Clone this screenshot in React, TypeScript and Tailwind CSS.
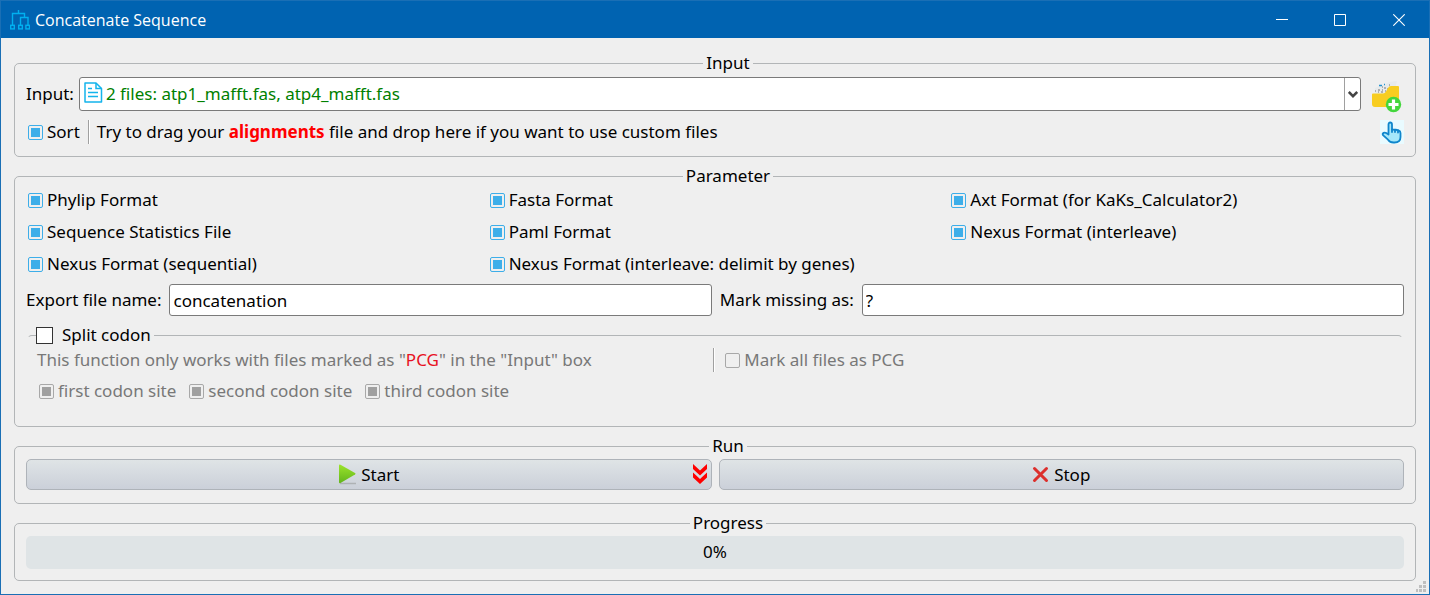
import React, { useState } from 'react';

const FORMATS = [
  'Phylip Format',
  'Fasta Format',
  'Axt Format (for KaKs_Calculator2)',
  'Sequence Statistics File',
  'Paml Format',
  'Nexus Format (interleave)',
  'Nexus Format (sequential)',
  'Nexus Format (interleave: delimit by genes)',
];

const CODON_SITES = ['first codon site', 'second codon site', 'third codon site'];

function CheckBox({ label, checked = false, disabled = false }: { label: string; checked?: boolean; disabled?: boolean }) {
  const [on, setOn] = useState(checked);
  return (
    <label className={`flex items-center gap-1 whitespace-nowrap ${disabled ? 'text-[#787878]' : ''}`}>
      <span className="relative flex size-[15px] shrink-0 items-center justify-center">
        <input
          type="checkbox"
          checked={on}
          disabled={disabled}
          onChange={(e) => setOn(e.target.checked)}
          className="peer size-[15px] appearance-none rounded-[2px] border border-[#3daee9] disabled:border-[#a8a8a8]"
        />
        <span className="pointer-events-none absolute hidden size-[9px] bg-[#3daee9] peer-checked:block peer-disabled:bg-[#a0a0a0]" />
      </span>
      {label}
    </label>
  );
}

function Group({ title, className, children }: { title: string; className: string; children: React.ReactNode }) {
  return (
    <fieldset className={`min-w-0 rounded-[5px] border border-[#b2b5b7] px-[11px] ${className}`}>
      <legend className="mx-auto flex h-[25px] items-center pr-[3px]">
        <span className="mr-[3px] h-px w-[26px] bg-[#b2b5b7]" />
        <span className="pb-[2px]">{title}</span>
      </legend>
      {children}
    </fieldset>
  );
}

function Divider() {
  return <span className="h-6 w-[2px] border-l border-[#a0a0a0] bg-white" />;
}

function TreeIcon() {
  return (
    <svg width="20" height="20" viewBox="0 0 20 20" fill="none" stroke="#00b0f0" strokeWidth="1.4">
      <path d="M8.500 0v3.500M2.500 15V3.500h12V7.500M10.500 15V7.500h7.500V15" />
      <rect x=".7" y="15.300" width="3.600" height="3.600" />
      <rect x="8.700" y="15.300" width="3.600" height="3.600" />
      <rect x="15.900" y="15.300" width="3.600" height="3.600" />
    </svg>
  );
}

function FileIcon() {
  return (
    <svg className="pointer-events-none absolute left-[5px] top-[5px]" width="19" height="21" viewBox="0 0 19 21" fill="none" stroke="#14b4ec" strokeWidth="1.5">
      <path d="M1 1h11l5.500 5.500V20H1z" strokeLinejoin="round" />
      <path d="M12 1v5.500h5.500M4 6.500h4M4 10.500h10M4 14.500h10" />
    </svg>
  );
}

function FolderAddIcon() {
  return (
    <svg className="overflow-visible" width="32" height="34" viewBox="0 0 32 34">
      <path d="M3 16v-5l6-3 5-1 3-2 8-1-2 8-12 5z" fill="#e7eaeb" />
      <path d="M3 14h1M6 13h2M10 13h1M12 11h2M6 15h1M9 15h2M10 10h1M13 14h1M15 12h1M17 8h1" stroke="#777" strokeWidth="1" />
      <path d="M7 8.500h3M12 7.500h1" stroke="#2492cf" strokeWidth="1.500" />
      <path d="M0 17.500q0-1 1-1h10q2 0 3-2l2-3.500q1-2 3-2h7q1 0 1 1v17.500q0 2.500-2 2.500H3q-3 0-3-3z" fill="#f8cd20" />
      <circle cx="21.500" cy="27.500" r="7.700" fill="#43d63c" />
      <path d="M21.500 22.500v10M16.500 27.500h10" stroke="#fff" strokeWidth="3.200" />
    </svg>
  );
}

function HandIcon() {
  return (
    <svg width="24" height="24" viewBox="0 0 24 24" fill="#a5e8fa" stroke="#0f86cc" strokeWidth="1.800" strokeLinejoin="round" strokeLinecap="round">
      <path d="M8.500 14.500V4.500Q8.500 2.500 10.200 2.500T12 4.500V9.500q4.500.2 6.500.9 2 .7 2 2.600v4q0 5.500-6 5.500h-1q-3.500 0-5.500-2.800L3 15.200q-.8-1.500.6-2.300 1.300-.6 2.600.2z" />
      <path d="M12 9.500v2.500M15 10v2M18 10.500v2" fill="none" />
    </svg>
  );
}

export default function App() {
  const [fileName, setFileName] = useState('concatenation');
  const [missing, setMissing] = useState('?');
  const [split, setSplit] = useState(false);
  const field = 'h-8 min-w-0 flex-1 rounded-[3px] border border-[#7a7a7a] bg-white px-[3px]';
  const action =
    'relative flex h-[31px] min-w-0 flex-1 items-center justify-center rounded-[5px] border border-[#aeb3b9] bg-linear-to-b from-[#dfe4e6] to-[#cbd0d9]';

  return (
    <div className="relative flex min-h-screen flex-col border border-[#1a6fb5] bg-[#efefef] font-['Noto_Sans','Open_Sans',sans-serif] text-[17px] leading-6 text-black">
      <header className="flex h-[37px] items-center bg-[#0063b1] pl-[9px] text-white">
        <TreeIcon />
        <h1 className="ml-[5px] flex-1 font-['Open_Sans','Noto_Sans',sans-serif] text-[16px]">Concatenate Sequence</h1>
        <button aria-label="Minimize" className="flex h-full w-[58px] items-center justify-center">
          <svg width="12" height="12" stroke="#fff"><path d="M0 5.500h12" /></svg>
        </button>
        <button aria-label="Maximize" className="flex h-full w-[58px] items-center justify-center">
          <svg width="12" height="12" fill="none" stroke="#fff"><path d="M.5.5h11v11H.5z" /></svg>
        </button>
        <button aria-label="Close" className="flex h-full w-[60px] items-center justify-center">
          <svg width="12" height="12" stroke="#fff" strokeWidth="1.100"><path d="M.3.3l11.400 11.400M11.700.3L.3 11.700" /></svg>
        </button>
      </header>

      <main className="flex flex-col gap-[7px] px-[13px] pt-[13px] pb-[13px]">
        <Group title="Input" className="pb-3">
          <div className="mt-px flex items-center">
            <label htmlFor="files" className="mr-[5px]">Input:</label>
            <div className="relative min-w-0 flex-1">
              <select
                id="files"
                className="block h-[34px] w-full appearance-none rounded-[3px] border border-[#7a7a7a] bg-white pl-[26px] text-[#008000]"
              >
                <option>2 files: atp1_mafft.fas, atp4_mafft.fas</option>
              </select>
              <FileIcon />
              <span className="pointer-events-none absolute inset-y-px right-px flex w-4 items-center justify-center border-l border-[#a0a0a0]">
                <svg width="10" height="7" fill="none" stroke="#444" strokeWidth="2.500"><path d="M.8 1L5 5.200 9.200 1" /></svg>
              </span>
            </div>
            <button aria-label="Add files" className="ml-[11px] h-[34px] w-8">
              <FolderAddIcon />
            </button>
          </div>
          <div className="mt-[9px] flex h-6 items-center pl-[2px]">
            <CheckBox label="Sort" checked />
            <span className="ml-2 flex"><Divider /></span>
            <p className="ml-[7px] flex-1">
              Try to drag your <b className="text-[#ff0000]">alignments</b> file and drop here if you want to use custom files
            </p>
            <button aria-label="Choose files" className="bg-[#e9fbff]">
              <HandIcon />
            </button>
          </div>
        </Group>

        <Group title="Parameter" className="pb-[23px]">
          <div className="grid auto-rows-[22px] grid-cols-3 gap-x-[9px] gap-y-[10px] pl-[2px]">
            {FORMATS.map((name) => (
              <CheckBox key={name} label={name} checked />
            ))}
          </div>
          <div className="mt-[9px] flex items-center gap-2">
            <label htmlFor="export-name">Export file name:</label>
            <input id="export-name" className={field} value={fileName} onChange={(e) => setFileName(e.target.value)} />
            <label htmlFor="missing">Mark missing as:</label>
            <input id="missing" className={field} value={missing} onChange={(e) => setMissing(e.target.value)} />
          </div>
          <fieldset className="mx-px mt-[7px] min-w-0 rounded-[5px] border border-transparent border-t-[#b2b5b7] pl-2">
            <legend className="h-[25px] pr-[3px]">
              <label className="flex h-[24px] items-center gap-[9px]">
                <input
                  type="checkbox"
                  checked={split}
                  onChange={(e) => setSplit(e.target.checked)}
                  className="size-[17px] appearance-none border border-[#333] bg-white checked:bg-[#3daee9]"
                />
                Split codon
              </label>
            </legend>
            <div className="grid grid-cols-[59fr_60fr] text-[#787878]">
              <p className="pl-px">
                This function only works with files marked as "<span className="text-[#e81123]">PCG</span>" in the "Input" box
              </p>
              <div className="flex items-center gap-[10px]">
                <Divider />
                <CheckBox label="Mark all files as PCG" disabled />
              </div>
            </div>
            <div className="mt-2 flex h-[22px] gap-[13px] pl-[3px]">
              {CODON_SITES.map((name) => (
                <CheckBox key={name} label={name} checked disabled />
              ))}
            </div>
          </fieldset>
        </Group>

        <Group title="Run" className="pb-[13px]">
          <div className="flex gap-[7px]">
            <button className={`${action} gap-1`}>
              <svg width="19" height="21" viewBox="0 0 19 21">
                <defs>
                  <linearGradient id="play" x2="0" y2="1">
                    <stop stopColor="#9be32a" />
                    <stop offset="1" stopColor="#62b51c" />
                  </linearGradient>
                </defs>
                <path d="M2 19.500h16" stroke="#aeb2b4" strokeWidth="1.500" />
                <path d="M1 1.500Q1 0 2.500.8L17 9q1.300.8 0 1.600L2.500 19Q1 19.800 1 18z" fill="url(#play)" />
              </svg>
              Start
              <svg className="absolute right-1 top-1" width="14" height="20" viewBox="0 0 14 20" fill="#ff0000">
                <path d="M0 0l7 6.500L14 0v5l-7 6.500L0 5zM0 8.500L7 15l7-6.500v5L7 20 0 13.500z" />
              </svg>
            </button>
            <button className={`${action} gap-[5px]`}>
              <svg width="17" height="17" viewBox="0 0 17 17" stroke="#dc2f2c" strokeWidth="3" strokeLinecap="round">
                <path d="M2.500 2.500l12 12M14.500 2.500l-12 12" />
              </svg>
              Stop
            </button>
          </div>
        </Group>

        <Group title="Progress" className="pb-[11px]">
          <div
            role="progressbar"
            aria-label="Progress"
            aria-valuenow={0}
            className="flex h-[33px] items-center justify-center rounded-[5px] bg-[#dfe4e6] pb-[2px]"
          >
            0%
          </div>
        </Group>
      </main>

      <svg className="absolute bottom-[2px] right-[3px]" width="10" height="11" fill="#bfbfbf">
        <path d="M7 0h3v3H7zM3 4h3v3H3zM7 4h3v3H7zM0 8h2v3H0zM3 8h3v3H3zM7 8h3v3H7z" />
      </svg>
    </div>
  );
}
